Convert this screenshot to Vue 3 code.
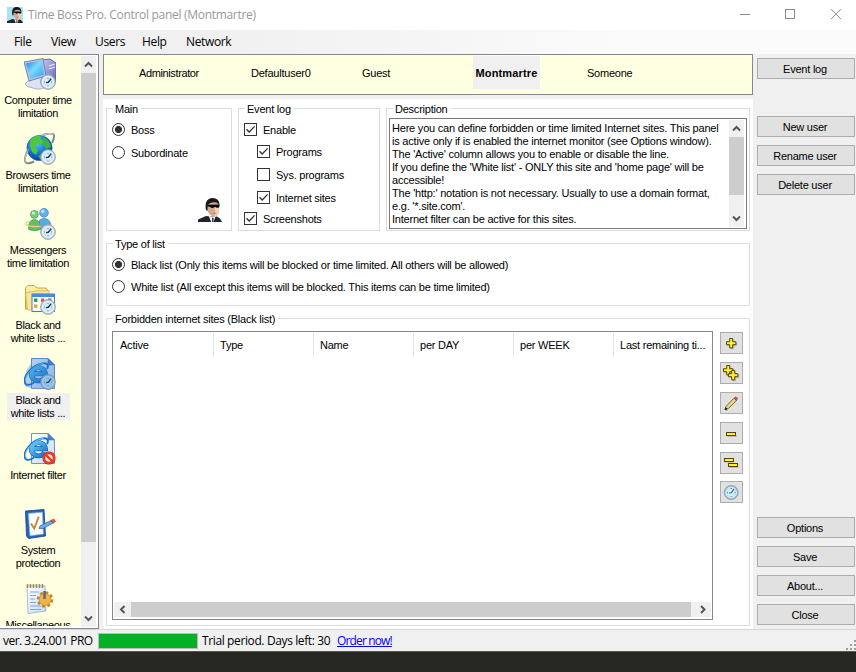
<script setup>
const menus = ['File', 'View', 'Users', 'Help', 'Network']
const users = [
  { name: 'Administrator', cls: 'u-admin' },
  { name: 'Defaultuser0', cls: 'u-default' },
  { name: 'Guest', cls: 'u-guest' },
  { name: 'Montmartre', cls: 'u-mont' },
  { name: 'Someone', cls: 'u-some' },
]
const sections = [
  { icon: 'computer', lines: ['Computer time', 'limitation'] },
  { icon: 'globe', lines: ['Browsers time', 'limitation'] },
  { icon: 'people', lines: ['Messengers', 'time limitation'] },
  { icon: 'folder', lines: ['Black and', 'white lists ...'] },
  { icon: 'iesel', lines: ['Black and', 'white lists ...'], selected: true },
  { icon: 'iefilter', lines: ['Internet filter'] },
  { icon: 'system', lines: ['System', 'protection'] },
  { icon: 'misc', lines: ['Miscellaneous'] },
]
const logOptions = [
  { label: 'Enable', on: true, cls: 'o1' },
  { label: 'Programs', on: true, cls: 'o2' },
  { label: 'Sys. programs', on: false, cls: 'o3' },
  { label: 'Internet sites', on: true, cls: 'o4' },
  { label: 'Screenshots', on: true, cls: 'o5' },
]
const description = [
  'Here you can define forbidden or time limited Internet sites. This panel',
  'is active only if is enabled the internet monitor (see Options window).',
  "The 'Active' column allows you to enable or disable the line.",
  "If you define the 'White list' - ONLY this site and 'home page' will be",
  'accessible!',
  "The 'http:' notation is not necessary. Usually to use a domain format,",
  "e.g. '*.site.com'.",
  'Internet filter can be active for this sites.',
]
const columns = ['Active', 'Type', 'Name', 'per DAY', 'per WEEK', 'Last remaining ti...']
const tools = ['plus', 'plus2', 'pencil', 'minus', 'minus2', 'clock']
</script>

<template>
  <div class="screen">
    <svg class="defs" width="0" height="0">
      <defs>
        <linearGradient id="gBlue" x1="0" y1="0" x2="1" y2="1">
          <stop offset="0" stop-color="#1d7fd8" /><stop offset=".45" stop-color="#7adbff" /><stop offset="1" stop-color="#2f9fea" />
        </linearGradient>
        <linearGradient id="gTower" x1="0" y1="0" x2="1" y2="1">
          <stop offset="0" stop-color="#c9cdf3" /><stop offset="1" stop-color="#5d5db4" />
        </linearGradient>
        <radialGradient id="gGlobe" cx=".4" cy=".3" r=".75">
          <stop offset="0" stop-color="#5cc4ff" /><stop offset=".6" stop-color="#0e6fd0" /><stop offset="1" stop-color="#073a8c" />
        </radialGradient>
        <linearGradient id="gFolder" x1="0" y1="0" x2="0" y2="1">
          <stop offset="0" stop-color="#fff3b0" /><stop offset="1" stop-color="#edc65a" />
        </linearGradient>
        <linearGradient id="gPage" x1="0" y1="0" x2="1" y2="1">
          <stop offset="0" stop-color="#ffffff" /><stop offset="1" stop-color="#c3d8f6" />
        </linearGradient>
        <linearGradient id="gE" x1="0" y1="0" x2="1" y2="1">
          <stop offset="0" stop-color="#6bd0fc" /><stop offset="1" stop-color="#1272cf" />
        </linearGradient>
        <radialGradient id="gFace" cx=".5" cy=".5" r=".6">
          <stop offset="0" stop-color="#f2fcff" /><stop offset="1" stop-color="#a2daf2" />
        </radialGradient>
        <g id="miniclock">
          <circle cx="24" cy="24" r="7.4" fill="#c3ccd6" stroke="#8f9aa8" stroke-width=".8" />
          <circle cx="24" cy="24" r="5.5" fill="url(#gFace)" stroke="#f3f8fb" stroke-width="1.1" />
          <path d="M20 24h.8M24 20v.8M24 27.4v.8M28 24h-.8" stroke="#668" stroke-width=".9" />
          <path d="M27.2 20.6L24.3 24.3L22 24.6" fill="none" stroke="#1c3450" stroke-width="1.4" />
        </g>
        <g id="ie">
          <path d="M7.5 .5H24L30.5 7V30.5H7.5z" fill="url(#gPage)" stroke="#7292c6" stroke-width="1" />
          <path d="M24 .5V7h6.5z" fill="#4a80d4" stroke="#4a78c0" stroke-width=".6" />
          <path d="M20.6 19.4A7 6.6 0 1 1 21.4 15.8H8" fill="none" stroke="#0c5cae" stroke-width="4.9" />
          <path d="M20.6 19.4A7 6.6 0 1 1 21.4 15.8H8" fill="none" stroke="url(#gE)" stroke-width="3.8" />
          <path d="M2 26.5C-3 20 8 6.5 19.5 5.2C24.6 5 24.4 8 23 11" fill="none" stroke="#1873cf" stroke-width="2" />
          <path d="M2.3 25C-1.5 19 9 7 19.5 5.2" fill="none" stroke="#8ad8fc" stroke-width=".9" />
          <path d="M2 26.4Q5 28 10 24.4" fill="none" stroke="#1873cf" stroke-width="1.8" />
        </g>
        <g id="boss">
          <path d="M0 24V21.5L8 18L12 18.5L19 18.5L22 20.5L24 24z" fill="#20242c" />
          <path d="M10 16L13 19L17.5 18.5L15.5 24H13.2z" fill="#f4f6f8" />
          <path d="M14.2 19.4L15.6 20L15.4 24H14z" fill="#252a34" />
          <path d="M8.4 6Q9 1.5 14.5 1.5Q21 2 21 8V13Q20.4 18.6 16.4 19Q11 18.4 8.6 10z" fill="#d9ab8e" />
          <path d="M16.5 9.5H21V13Q20.4 18.6 16.4 19L17.4 14z" fill="#efd2bb" />
          <path d="M8 12Q6 1.4 13.5 .1Q21.5 -.4 21.4 7L18.6 4.6Q12.4 3.4 9.8 7L9.4 13z" fill="#16191d" />
          <path d="M9.4 6.8L21.8 6.6L21.2 9.2Q18.8 10.6 17 8.8Q14.4 11.2 12 9L9.4 8.2z" fill="#08090b" />
          <path d="M14.4 15.4h4" stroke="#b07e66" stroke-width=".8" />
        </g>
        <g id="plus">
          <path d="M3.7.5h3v3.2h3.2v3H6.7v3.2h-3V6.7H.5v-3h3.2z" transform="translate(1 1)" fill="#aaa" stroke="#c2c2c2" />
          <path d="M3.7.5h3v3.2h3.2v3H6.7v3.2h-3V6.7H.5v-3h3.2z" fill="#fff030" stroke="#554400" stroke-width="1" />
        </g>
      </defs>
    </svg>

    <header class="titlebar">
      <svg class="appicon" width="16" height="16" viewBox="0 0 24 24"><rect width="24" height="24" fill="#a9e2f2" /><use href="#boss" /></svg>
      <span class="title">Time Boss Pro. Control panel (Montmartre)</span>
      <svg class="winctl" width="116" height="28" viewBox="740 0 116 28" fill="none" stroke="#8a8a8a">
        <path d="M740 13.5h10" /><rect x="785.5" y="8.5" width="9" height="9" /><path d="M831 8.2l10 10M841 8.2l-10 10" />
      </svg>
    </header>

    <nav class="menubar"><span v-for="m in menus" :key="m">{{ m }}</span></nav>

    <div class="body">
      <aside class="sidebar">
        <div class="sections">
          <div v-for="(s, i) in sections" :key="i" class="section" :class="{ selected: s.selected }">
            <svg class="sicon" width="32" height="32" viewBox="0 0 32 32">
              <g v-if="s.icon === 'computer'">
                <path d="M18 2L26 1L32 5V24L25 27L18 23z" fill="url(#gTower)" stroke="#4c4ca4" stroke-width=".8" />
                <path d="M25 8L31 6M25 11L31 9" stroke="#eef" stroke-width="1.2" />
                <path d="M1 26Q2 23 8 22L12 18L18 20L16 24L22 28Q17 33 9 30Q2 29 1 26z" fill="#dde1f2" stroke="#8f95c0" stroke-width=".7" />
                <path d="M0 4L19 .5L22 18L5 23z" fill="#b9c2e2" stroke="#5c6eb4" stroke-width=".8" />
                <path d="M2 5.4L17.8 2.5L20 16.7L6.2 20.5z" fill="url(#gBlue)" />
                <use href="#miniclock" />
              </g>
              <g v-else-if="s.icon === 'globe'">
                <circle cx="15.5" cy="15" r="12.6" fill="url(#gGlobe)" stroke="#164b9c" stroke-width=".6" />
                <path d="M6 7Q11 2 17 3L16 6L20 8L17 12L13 11L11 14L14 17L12 22L8 19L6 13z" fill="#4fc83e" />
                <path d="M19 4Q26 7 27 14L22 16L19 11zM14 23L19 20L17 27z" fill="#38b53a" />
                <path d="M18 2.4Q27-.8 29.6 1.6Q31 4 28 10M5 15.5C1 22-.5 28.5 2.5 30Q5 31 10 28.5" fill="none" stroke="#7d8795" stroke-width="2" />
                <path d="M18 2.4Q27-.8 29.6 1.6M3.6 18.5C1 24 0 28.5 2.5 30" fill="none" stroke="#d5dae2" stroke-width=".9" />
                <use href="#miniclock" />
              </g>
              <g v-else-if="s.icon === 'people'">
                <circle cx="20" cy="4.8" r="4.4" fill="#61b0e8" stroke="#3888c8" stroke-width=".7" />
                <path d="M14 19Q13.5 10.5 20 10.5Q27 10.5 27 19V21H14z" fill="#5ba9e2" stroke="#3888c8" stroke-width=".7" />
                <circle cx="10.4" cy="6.4" r="3.9" fill="#7ccb7d" stroke="#3d9e50" stroke-width=".7" />
                <path d="M4.6 21.5Q4 11.4 10.4 11.4Q16.6 11.6 16.6 21.5Q10.5 24 4.6 21.5z" fill="#64bb68" stroke="#3d9e50" stroke-width=".7" />
                <circle cx="18.8" cy="3.4" r="1.8" fill="#b8e1fb" /><circle cx="9.4" cy="5" r="1.5" fill="#ccf2cc" />
                <path d="M5 13.4C-1 15 1 19.4 17 18.4" fill="none" stroke="#edd07a" stroke-width="1.4" />
                <use href="#miniclock" />
              </g>
              <g v-else-if="s.icon === 'folder'">
                <path d="M1.5 26V5L4 2.5H10L13 5H22L24.5 8V26z" fill="url(#gFolder)" stroke="#c79b32" stroke-width=".9" />
                <path d="M3.5 27L1.5 10Q12 7 25 7.5V26z" fill="#fce594" stroke="#d0a63e" stroke-width=".6" />
                <rect x="8" y="11" width="22.5" height="17.5" fill="#f9fcff" stroke="#316bc6" stroke-width=".9" />
                <path d="M8 12.5h22.5" stroke="#428be9" stroke-width="3" />
                <path d="M10 15.5h3.4v3.4H10z" fill="#219d37" /><path d="M17 15.5h3.4v3.4H17z" fill="#e25a45" /><path d="M24 15.5h3.4v3.4H24z" fill="#6a5ac6" /><path d="M10 21.5h3.4v3.4H10z" fill="#e6a530" />
                <use href="#miniclock" />
              </g>
              <g v-else-if="s.icon === 'iesel'">
                <use href="#ie" /><use href="#miniclock" />
                <path d="M7 0h17l7 7v19Q30 32 24 32L17 30H7Q-2 30 1 20Q2 10 7 6z" fill="#2476c8" opacity=".34" />
              </g>
              <g v-else-if="s.icon === 'iefilter'">
                <use href="#ie" />
                <circle cx="25" cy="25" r="5.2" fill="#ffe8e0" stroke="#c92017" stroke-width="2.8" /><circle cx="25" cy="25" r="5.2" fill="none" stroke="#fb3a25" stroke-width="1.8" />
                <path d="M21.5 21.5l7 7" stroke="#f03322" stroke-width="2.4" />
              </g>
              <g v-else-if="s.icon === 'system'">
                <path d="M1.5 3L20 1.5L21.5 28L4.5 30.5L2.5 28z" fill="#2465bd" stroke="#123f8c" stroke-width=".8" />
                <path d="M4.4 5.4L18.4 4.2L19.4 26L6 27.8z" fill="#fbfdff" stroke="#8cb3e2" stroke-width=".7" />
                <path d="M7 15.5L10.2 20.5L14.8 8.6" fill="none" stroke="#c18620" stroke-width="1.8" />
                <path d="M16 18L27 12.5L29 15L19 20.6L15 20.5z" fill="#6faee7" stroke="#245494" stroke-width=".7" />
                <path d="M27 12.2L30 11.2L31.5 13.5L29 15.3z" fill="#e4633b" stroke="#8a3424" stroke-width=".6" />
              </g>
              <g v-else>
                <path d="M3 3L21 3L22 28L4 30.5z" fill="url(#gPage)" stroke="#90a4be" stroke-width=".7" />
                <path d="M3.5 1v4M6.5 1v4M9.5 1v4M12.5 1v4M15.5 1v4M18.5 1v4" stroke="#9b8b5a" stroke-width="1.5" />
                <path d="M6 9h9M6 12.5h6M6 16h5M6 19.5h6M6 23h11M6 26.5h11" stroke="#7cacdf" stroke-width="1.1" />
                <circle cx="21" cy="16.5" r="7" fill="none" stroke="#c98629" stroke-width="2.6" stroke-dasharray="3 2.5" />
                <circle cx="21" cy="16.5" r="6" fill="#eeb446" stroke="#c07f25" stroke-width=".7" />
                <path d="M20.5 8v8" stroke="#5b6677" stroke-width="2.4" />
              </g>
            </svg>
            <div class="slabel"><span v-for="l in s.lines" :key="l">{{ l }}</span></div>
          </div>
        </div>
        <div class="vscroll side-scroll">
          <svg width="15" height="17" viewBox="0 0 15 17"><path d="M4 10.5L7.5 7L11 10.5" class="chev" /></svg>
          <div class="thumb"></div>
          <svg width="15" height="17" viewBox="0 0 15 17"><path d="M4 6.5L7.5 10L11 6.5" class="chev" /></svg>
        </div>
      </aside>

      <main class="center">
        <div class="users"><div v-for="u in users" :key="u.name" class="user" :class="u.cls">{{ u.name }}</div></div>
        <div class="page">
          <div class="top-groups">
            <section class="group g-main">
              <h2>Main</h2>
              <div class="opt o1"><i class="radio on"></i><span>Boss</span></div>
              <div class="opt r2"><i class="radio"></i><span>Subordinate</span></div>
              <svg class="bossface" width="24" height="24" viewBox="0 0 24 24"><use href="#boss" /></svg>
            </section>
            <section class="group g-log">
              <h2>Event log</h2>
              <div v-for="o in logOptions" :key="o.label" class="opt" :class="o.cls">
                <i class="check"><svg v-if="o.on" width="11" height="11" viewBox="0 0 11 11"><path d="M1.5 5.2L4.2 8L9.6 2.4" fill="none" stroke="#333" stroke-width="1.3" /></svg></i>
                <span>{{ o.label }}</span>
              </div>
            </section>
            <section class="group g-desc">
              <h2>Description</h2>
              <div class="memo">
                <div class="memo-text"><p v-for="(d, i) in description" :key="i"><span>{{ d }}</span></p></div>
                <div class="vscroll memo-scroll">
                  <svg width="15" height="17" viewBox="0 0 15 17"><path d="M4 10.5L7.5 7L11 10.5" class="chev" /></svg>
                  <div class="thumb"></div>
                  <svg width="15" height="17" viewBox="0 0 15 17"><path d="M4 6.5L7.5 10L11 6.5" class="chev" /></svg>
                </div>
              </div>
            </section>
          </div>

          <section class="group g-type">
            <h2>Type of list</h2>
            <div class="opt o1"><i class="radio on"></i><span>Black list (Only this items will be blocked or time limited. All others will be allowed)</span></div>
            <div class="opt o2r"><i class="radio"></i><span>White list (All except this items will be blocked. This items can be time limited)</span></div>
          </section>

          <section class="group g-sites">
            <h2>Forbidden internet sites (Black list)</h2>
            <div class="sites">
              <div class="list">
                <div class="thead"><div v-for="c in columns" :key="c">{{ c }}</div></div>
                <div class="rows"></div>
                <div class="hscroll">
                  <svg width="17" height="15" viewBox="0 0 17 15"><path d="M10.5 4L7 7.5L10.5 11" class="chev" /></svg>
                  <div class="hthumb"></div>
                  <svg width="20" height="15" viewBox="0 0 20 15"><path d="M10 4L13.5 7.5L10 11" class="chev" /></svg>
                </div>
              </div>
              <div class="tools">
                <button v-for="t in tools" :key="t" :class="t">
                  <svg width="17" height="17" viewBox="0 0 17 17">
                    <g v-if="t === 'plus'"><use href="#plus" x="3" y="3" /></g>
                    <g v-else-if="t === 'plus2'"><use href="#plus" x="0" y="0" /><use href="#plus" x="5" y="5" /></g>
                    <g v-else-if="t === 'pencil'">
                      <path d="M2.6 15.8L5 14.8" stroke="#aaa" />
                      <path d="M2 14.6L3.2 11.3L11 3.2L13.4 5.5L5.5 13.4z" fill="#f0d888" stroke="#66552e" stroke-width=".9" />
                      <path d="M11 3.2L13 1.8L14.6 3.4L13.4 5.5z" fill="#d8604e" stroke="#80413a" stroke-width=".7" />
                      <path d="M2 14.6L2.7 12.7L4 14z" fill="#222" stroke="#222" />
                    </g>
                    <g v-else-if="t === 'minus'"><path d="M4.5 11.3h9.5" stroke="#bcbcbc" stroke-width="1.5" /><rect x="3.5" y="7.5" width="9" height="3" fill="#fff030" stroke="#554400" /></g>
                    <g v-else-if="t === 'minus2'">
                      <path d="M2 7h9M6 12.2h9.5" stroke="#bcbcbc" stroke-width="1.5" />
                      <rect x="1.5" y="3.5" width="9" height="3" fill="#fff030" stroke="#554400" /><rect x="5.5" y="8.5" width="9" height="3" fill="#fff030" stroke="#554400" />
                    </g>
                    <g v-else>
                      <circle cx="8.2" cy="8.5" r="7" fill="#9eb6c8" stroke="#8597a6" stroke-width=".8" />
                      <circle cx="8.2" cy="8.5" r="5.4" fill="url(#gFace)" stroke="#dcecf4" stroke-width="1" />
                      <path d="M11 5L8.3 8.8L6 9M8.2 4v.7M8.2 12.4v.6M4 8.6h.6M11.8 8.6h.6" fill="none" stroke="#235c88" stroke-width="1.2" />
                    </g>
                  </svg>
                </button>
              </div>
            </div>
          </section>
        </div>
      </main>

      <aside class="actions">
        <button>Event log</button>
        <button class="gap-users">New user</button>
        <button>Rename user</button>
        <button>Delete user</button>
        <button class="bottom">Options</button>
        <button>Save</button>
        <button>About...</button>
        <button>Close</button>
      </aside>
    </div>

    <footer class="status">
      <span class="ver">ver. 3.24.001 PRO</span>
      <div class="progress"></div>
      <span class="trial">Trial period. Days left: 30</span>
      <a class="order">Order now!</a>
      <svg class="grip" width="10" height="10" viewBox="0 0 10 10"><path d="M8 0h2v2h-2zM4 4h2v2h-2zM8 4h2v2h-2zM0 8h2v2h-2zM4 8h2v2h-2zM8 8h2v2h-2z" fill="#9c9c9c" /></svg>
    </footer>
    <div class="desktop"></div>
  </div>
</template>

<style>
body { margin: 0; overflow: hidden; }
</style>

<style scoped>
* { box-sizing: border-box; }
.screen { width: 856px; height: 672px; display: flex; flex-direction: column; overflow: hidden; background: #f0f0f0; color: #000; font: 11px/13px "Liberation Sans", sans-serif; letter-spacing: -0.23px; white-space: nowrap; }
.defs { position: absolute; }
svg { display: block; flex: none; }
.chev { fill: none; stroke: #555; stroke-width: 2; }
h2, p { margin: 0; font-weight: normal; font-size: inherit; }
button { margin: 0; padding: 0; border: 1px solid #adadad; background: #e1e1e1; font: inherit; letter-spacing: inherit; color: #000; border-radius: 0; }

.titlebar { height: 30px; flex: none; background: #fff; display: flex; align-items: center; padding-left: 7px; font: 12px/16px "Open Sans", sans-serif; color: #999; }
.title { margin-left: 5px; letter-spacing: -0.3px; }
.winctl { margin-left: auto; }
.menubar { height: 24px; flex: none; display: grid; grid-template-columns: 37px 44px 47px 44px auto; padding-left: 14px; background: linear-gradient(90deg, #f0f0f0 25%, #fbfbfb 75%); font: 12px/24px "Open Sans", sans-serif; letter-spacing: -0.35px; }

.body { height: 575px; flex: none; display: flex; }
.sidebar { width: 99px; height: 575px; display: flex; border: solid #828790; border-width: 1px 1px 1px 0; background: #fff; padding-right: 2px; }
.sections { width: 81px; background: #ffffe1; overflow: hidden; padding-top: 3px; height: 571px; }
.section { height: 75px; display: flex; flex-direction: column; align-items: center; padding-right: 5px; letter-spacing: -0.36px; }
.sicon { margin-left: 4px; }
.slabel { margin-top: 3px; padding-top: 1px; min-width: 63px; display: flex; flex-direction: column; align-items: center; }
.selected .slabel { background: #f0f0f0; }
.vscroll { width: 15px; flex: none; background: #f0f0f0; display: flex; flex-direction: column; }
.thumb { background: #cdcdcd; width: 15px; }
.side-scroll { height: 571px; margin-top: 1px; justify-content: space-between; }
.side-scroll .thumb { height: 469px; margin-bottom: auto; }

.center { width: 650px; margin-left: 4px; display: flex; flex-direction: column; }
.users { height: 41px; border: 1px solid #828790; background: #ffffe1; display: flex; padding: 1px 0 0; }
.user { height: 33px; line-height: 34px; }
.u-admin { margin-left: 35px; width: 112px; letter-spacing: -0.38px; }
.u-default { width: 111px; }
.u-guest { width: 111px; }
.u-mont { width: 67px; background: #f0f0f0; font-weight: bold; text-align: center; letter-spacing: 0.15px; }
.u-some { margin-left: 47px; }

.page { margin-top: 4px; height: 530px; background: #fff; padding: 9px 3px 0; }
.top-groups { display: flex; height: 123px; }
.group { border: 1px solid #dcdcdc; display: flex; flex-direction: column; align-items: flex-start; }
.group h2 { margin: -7px 0 0 6px; padding: 1px 3px 0 2px; height: 13px; flex: none; background: #fff; }
.g-main { width: 126px; margin-right: 6px; }
.g-log { width: 142px; margin-right: 6px; }
.g-desc { width: 364px; }
.opt { display: flex; height: 13px; line-height: 15px; gap: 6px; margin-left: 5px; }
.o1 { margin-top: 8px; }
.r2 { margin-top: 10px; }
.o2r { margin-top: 9px; }
.o2 { margin: 9px 0 0 18px; }
.o3, .o4 { margin: 10px 0 0 18px; }
.o5 { margin-top: 8px; }
.radio { width: 13px; height: 13px; border: 1px solid #333; border-radius: 50%; background: #fff; }
.radio.on { background: radial-gradient(circle, #333 0 3.2px, #fff 3.9px); }
.check { width: 13px; height: 13px; border: 1px solid #333; background: #fff; }
.bossface { margin: 39px 0 0 91px; }
.memo { margin: 3px 0 0 2px; width: 358px; height: 111px; border: 1px solid #7a7a7a; display: flex; justify-content: space-between; padding: 1px; }
.memo-text { padding: 2px 0 0 1px; letter-spacing: -0.21px; }
.memo-scroll { margin-right: 1px; justify-content: space-between; }
.memo-scroll .thumb { height: 58px; margin-bottom: auto; }

.g-type { height: 63px; margin-top: 12px; }
.g-sites { height: 308px; margin-top: 12px; }
.sites { display: flex; margin: 6px 0 0 5px; }
.list { width: 601px; height: 289px; border: 1px solid #828790; display: flex; flex-direction: column; padding: 1px; }
.thead { display: grid; grid-template-columns: 100px 100px 100px 100px 100px 97px; height: 24px; }
.thead div { border-right: 1px solid #e5e5e5; padding-left: 6px; line-height: 24px; overflow: hidden; }
.thead div:last-child { border-right: 0; }
.rows { flex: 1; }
.hscroll { display: flex; height: 15px; background: #f0f0f0; margin-bottom: 1px; }
.hthumb { width: 560px; background: #cdcdcd; }
.tools { margin: 1px 0 0 7px; display: flex; flex-direction: column; gap: 8px; }
.tools button { width: 23px; height: 22px; display: flex; align-items: center; justify-content: center; }
.tools .clock { margin-top: -1px; }

.actions { margin-left: 4px; width: 98px; padding-top: 4px; display: flex; flex-direction: column; gap: 8px; height: 571px; }
.actions button { height: 21px; flex: none; line-height: 20px; padding-right: 2px; }
.actions .gap-users { margin-top: 29px; }
.actions .bottom { margin-top: auto; }

.status { height: 23px; flex: none; border-top: 1px solid #d7d7d7; border-bottom: 1px solid #555; display: flex; align-items: center; padding-left: 3px; font: 12px/16px "Open Sans", sans-serif; }
.ver { width: 95px; letter-spacing: -0.52px; }
.progress { width: 100px; height: 16px; background: #06b025; border: 1px solid #bcbcbc; }
.trial { margin-left: 4px; width: 135px; letter-spacing: -0.38px; }
.order { color: #0000ff; text-decoration: underline; letter-spacing: -0.85px; }
.grip { margin: 8px 0 0 auto; }
.desktop { flex: 1; background: #272822; }
</style>
